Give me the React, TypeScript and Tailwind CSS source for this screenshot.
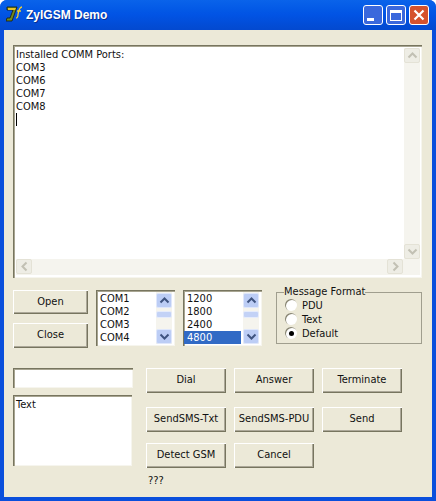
import type { ReactNode } from "react";

const raised = "bg-[#ece9d8] shadow-[inset_1px_1px_0_#ffffff,inset_-1px_-1px_0_#77755f,inset_-2px_-2px_0_#aca899]";
const sunken = "bg-white shadow-[inset_1px_1px_0_#77755f,inset_2px_2px_0_#a8a591,inset_-1px_-1px_0_#f6f5ee]";

function Chevron({ dir, color, size = 11 }: { dir: "up" | "down" | "left" | "right"; color: string; size?: number }) {
  const points = {
    up: "1.5,7.5 5.5,3.5 9.5,7.5",
    down: "1.5,3.5 5.5,7.5 9.5,3.5",
    left: "7.5,1.5 3.5,5.5 7.5,9.5",
    right: "3.5,1.5 7.5,5.5 3.5,9.5",
  }[dir];
  return (
    <svg width={size} height={size} viewBox="0 0 11 11">
      <polyline points={points} fill="none" stroke={color} strokeWidth="2" />
    </svg>
  );
}

function ScrollBtn({ dir, disabled }: { dir: "up" | "down" | "left" | "right"; disabled?: boolean }) {
  return (
    <div
      className={`flex h-[15px] w-[16px] shrink-0 items-center justify-center rounded-[2px] border ${
        disabled ? "border-[#e4e2d6] bg-[#eeede5]" : "border-[#dfe7fb] bg-[#bccdf5]"
      }`}
    >
      <Chevron dir={dir} color={disabled ? "#c2c0b4" : "#3f5480"} />
    </div>
  );
}

function Btn({ label, w = "w-[80px]", h = "h-[25px]" }: { label: string; w?: string; h?: string }) {
  return <div className={`flex items-center justify-center whitespace-nowrap pb-[2px] ${w} ${h} ${raised}`}>{label}</div>;
}

function ListBox({ items, selected }: { items: string[]; selected?: string }) {
  return (
    <div className={`flex h-[56px] w-[79px] py-[2px] pl-px pr-[3px] ${sunken}`}>
      <div className="flex-1">
        {items.map((it) => (
          <div key={it} className={`h-[13px] pl-[3px] ${it === selected ? "mr-[2px] bg-[#316ac5] text-white" : ""}`}>
            {it}
          </div>
        ))}
      </div>
      <div className="flex w-[16px] flex-col bg-[#f5f4ee] pt-px">
        <ScrollBtn dir="up" />
        <div className="mt-[3px] h-[7px] rounded-[2px] border border-[#e6ecfb] bg-[#c3d2f6]" />
        <div className="flex-1" />
        <ScrollBtn dir="down" />
      </div>
    </div>
  );
}

function Radio({ label, checked }: { label: string; checked?: boolean }) {
  return (
    <div className="flex h-[14px] items-center">
      <div className="flex h-[12px] w-[12px] items-center justify-center rounded-full bg-white shadow-[inset_1px_1px_0_#86836f]">
        {checked && <div className="h-[5px] w-[5px] rounded-full bg-black" />}
      </div>
      <span className="ml-[5px]">{label}</span>
    </div>
  );
}

function WinBtn({ className, children }: { className: string; children: ReactNode }) {
  return (
    <div className={`flex h-[20px] w-[20px] items-center justify-center rounded-[3px] border border-white ${className}`}>
      {children}
    </div>
  );
}

function Logo() {
  return (
    <svg width="20" height="18" viewBox="0 0 20 18" className="shrink-0">
      <polygon points="1,1 11,1 6,15 0,15 1,12 4,12 7,4 1,4" fill="#6f8a1e" stroke="#1d1c08" strokeWidth="0.8" />
      <polygon points="2,2 10,2 9,4 2,4" fill="#e8c428" />
      <path d="M12 8 C13 3 14 1 16 1 M11 5 L15 5 M12 8 C12 11 11 12 10 12" fill="none" stroke="#f2d030" strokeWidth="1.3" />
    </svg>
  );
}

export default function App() {
  return (
    <div className="flex h-[501px] w-[436px] flex-col overflow-hidden rounded-t-[7px] bg-[#0a4fdc] font-['DejaVu_Sans_Condensed','DejaVu_Sans',sans-serif] text-[11px] leading-[13px] text-[#111] [font-stretch:condensed]">
      <div className="flex h-[30px] shrink-0 items-center bg-gradient-to-b from-[#0a63ea] via-[#0153e4] to-[#0349cf] pl-[6px] pr-[7px]">
        <Logo />
        <span className="font-['Liberation_Sans',Arial,sans-serif] text-[12px] font-bold text-white [text-shadow:1px_1px_0_#0a2f90]">ZylGSM Demo</span>
        <div className="ml-auto flex gap-[3px]">
          <WinBtn className="bg-[#3a68dc]">
            <div className="mt-[9px] mr-[5px] h-[3px] w-[7px] bg-white" />
          </WinBtn>
          <WinBtn className="bg-[#3a68dc]">
            <div className="h-[11px] w-[12px] border border-t-[3px] border-white" />
          </WinBtn>
          <WinBtn className="bg-[#d5522d]">
            <svg width="12" height="12" viewBox="0 0 12 12">
              <path d="M1.5 1.5 L10.5 10.5 M10.5 1.5 L1.5 10.5" stroke="#fff" strokeWidth="2.2" />
            </svg>
          </WinBtn>
        </div>
      </div>

      <div className="mx-[4px] mb-[4px] flex-1 bg-[#ece9d8] pl-[9px] pt-[15px]">
        {/* log memo */}
        <div className={`flex h-[233px] w-[409px] flex-col p-[3px] pr-[2px] ${sunken}`}>
          <div className="flex min-h-0 flex-1">
            <div className="flex-1">
              <div>Installed COMM Ports:</div>
              <div>COM3</div>
              <div>COM6</div>
              <div>COM7</div>
              <div>COM8</div>
              <div className="h-[13px] w-px bg-black" />
            </div>
            <div className="flex w-[16px] flex-col justify-between bg-[#f5f4ee]">
              <ScrollBtn dir="up" disabled />
              <ScrollBtn dir="down" disabled />
            </div>
          </div>
          <div className="flex h-[16px] justify-between bg-[#f5f4ee] pr-[17px]">
            <ScrollBtn dir="left" disabled />
            <ScrollBtn dir="right" disabled />
          </div>
        </div>

        <div className="mt-[12px] flex">
          <div className="flex flex-col gap-[9px]">
            <Btn label="Open" w="w-[75px]" h="h-[24px]" />
            <Btn label="Close" w="w-[75px]" />
          </div>
          <div className="ml-[8px]">
            <ListBox items={["COM1", "COM2", "COM3", "COM4"]} />
          </div>
          <div className="ml-[8px]">
            <ListBox items={["1200", "1800", "2400", "4800"]} selected="4800" />
          </div>
          <fieldset className="ml-[14px] mt-[-4px] h-[58px] w-[146px] border border-[#a09e8e] pl-[8px] pt-px">
            <legend className="-mb-[1px] ml-[-1px] leading-[12px]">Message Format</legend>
            <Radio label="PDU" />
            <Radio label="Text" />
            <Radio label="Default" checked />
          </fieldset>
        </div>

        <div className="mt-[20px] flex">
          <div className="flex flex-col gap-[7px]">
            <div className={`h-[20px] w-[120px] ${sunken}`} />
            <div className={`h-[71px] w-[119px] px-[3px] pt-[3px] ${sunken}`}>Text</div>
          </div>
          <div className="ml-[13px] flex flex-col">
            <div className="flex gap-[8px]">
              <Btn label="Dial" />
              <Btn label="Answer" />
              <Btn label="Terminate" />
            </div>
            <div className="mt-[14px] flex gap-[8px]">
              <Btn label="SendSMS-Txt" />
              <Btn label="SendSMS-PDU" />
              <Btn label="Send" />
            </div>
            <div className="mt-[11px] flex gap-[8px]">
              <Btn label="Detect GSM" />
              <Btn label="Cancel" />
            </div>
            <div className="ml-[2px] mt-[6px]">???</div>
          </div>
        </div>
      </div>
    </div>
  );
}
